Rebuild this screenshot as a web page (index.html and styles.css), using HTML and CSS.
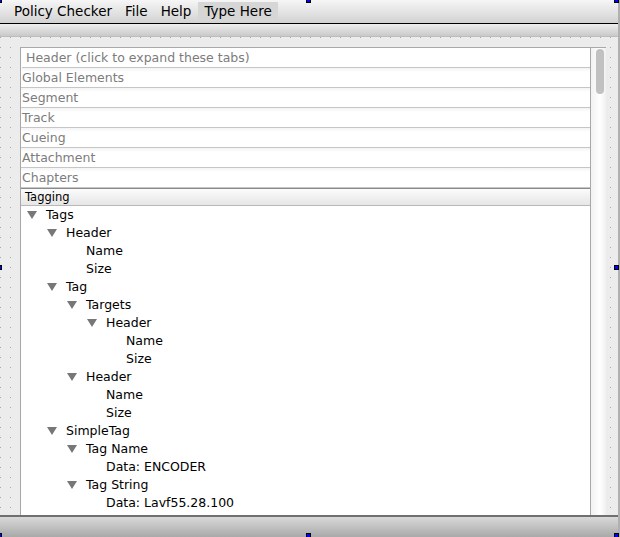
FILE: index.html
```html
<!DOCTYPE html>
<html>
<head>
<meta charset="utf-8">
<link rel="stylesheet" href="styles.css">
</head>
<body>
<div class="window">
  <div class="menubar">
    <span class="menu">Policy Checker</span>
    <span class="menu">File</span>
    <span class="menu">Help</span>
    <span class="menu typehere">Type Here</span>
  </div>
  <div class="toolbar"></div>
  <div class="canvas">
    <div class="panel">
      <div class="content">
        <div class="tab first">Header (click to expand these tabs)</div>
        <div class="tab">Global Elements</div>
        <div class="tab">Segment</div>
        <div class="tab">Track</div>
        <div class="tab">Cueing</div>
        <div class="tab">Attachment</div>
        <div class="tab">Chapters</div>
        <div class="section">Tagging</div>
        <div class="tree">
          <div class="node l0"><span class="tri"></span>Tags</div>
          <div class="node l1"><span class="tri"></span>Header</div>
          <div class="node l2"><span class="leaf"></span>Name</div>
          <div class="node l2"><span class="leaf"></span>Size</div>
          <div class="node l1"><span class="tri"></span>Tag</div>
          <div class="node l2"><span class="tri"></span>Targets</div>
          <div class="node l3"><span class="tri"></span>Header</div>
          <div class="node l4"><span class="leaf"></span>Name</div>
          <div class="node l4"><span class="leaf"></span>Size</div>
          <div class="node l2"><span class="tri"></span>Header</div>
          <div class="node l3"><span class="leaf"></span>Name</div>
          <div class="node l3"><span class="leaf"></span>Size</div>
          <div class="node l1"><span class="tri"></span>SimpleTag</div>
          <div class="node l2"><span class="tri"></span>Tag Name</div>
          <div class="node l3"><span class="leaf"></span>Data: ENCODER</div>
          <div class="node l2"><span class="tri"></span>Tag String</div>
          <div class="node l3"><span class="leaf"></span>Data: Lavf55.28.100</div>
        </div>
      </div>
      <div class="scrollbar"><div class="thumb"></div></div>
    </div>
  </div>
  <div class="statusbar"></div>
  <span class="handle h-tl"></span>
  <span class="handle h-tc"></span>
  <span class="handle h-tr"></span>
  <span class="handle h-ml"></span>
  <span class="handle h-mr"></span>
  <span class="handle h-bl"></span>
  <span class="handle h-bc"></span>
  <span class="handle h-br"></span>
</div>
</body>
</html>
```
FILE: styles.css
```css
html, body {
  margin: 0;
  padding: 0;
  background: #ffffff;
}
body {
  font-family: "DejaVu Sans", "Liberation Sans", sans-serif;
  width: 620px;
  height: 537px;
  overflow: hidden;
}
.window {
  position: relative;
  width: 618px;
  height: 537px;
  border-right: 2px solid #b0b0b0;
  display: flex;
  flex-direction: column;
  background: #ececec;
}
.menubar {
  height: 23px;
  border-bottom: 1px solid #000;
  background: linear-gradient(#f6f6f6, #d2d2d2);
  display: flex;
  align-items: center;
  padding-left: 8px;
  font-size: 13.5px;
  color: #000;
}
.menu {
  padding: 1px 6px;
  line-height: 17px;
}
.menu + .menu {
  margin-left: 1px;
}
.typehere {
  background: #d6d6d6;
  margin-left: 2px;
}
.toolbar {
  height: 12px;
  background: linear-gradient(#eeeeee, #c9c9c9);
  border-bottom: 1px solid #bdbdbd;
}
.canvas {
  flex: 1;
  background-color: #ececec;
  background-image: radial-gradient(circle at 0.5px 0.5px, #a8a8a8 0.8px, transparent 0.9px);
  background-size: 10px 10px;
  background-position: 0 0;
  padding: 10px 12px 0 20px;
  display: flex;
}
.panel {
  flex: 1;
  display: flex;
  background: #fff;
  border-top: 1px solid #a9a9a9;
}
.content {
  flex: 1;
  border-left: 1px solid #a8a8a8;
  border-right: 1px solid #a8a8a8;
  overflow: hidden;
}
.tab {
  height: 19px;
  line-height: 19px;
  font-size: 12.5px;
  color: #7c7c7c;
  padding-left: 1px;
  border-bottom: 1px solid #c6c6c6;
  background: linear-gradient(#f4f4f4, #ffffff 4px);
}
.tab.first {
  padding-left: 4px;
  background: #fff;
  margin-left: 1px;
}
.section {
  height: 16px;
  line-height: 16px;
  font-size: 11.5px;
  color: #000;
  padding-left: 4px;
  border-top: 1px solid #8a8a8a;
  border-bottom: 1px solid #b8b8b8;
  background: linear-gradient(#fbfbfb, #e6e6e6);
}
.tree {
  font-size: 12.5px;
  color: #000;
}
.node {
  height: 18px;
  line-height: 18px;
  display: flex;
  align-items: center;
}
.tri {
  width: 0;
  height: 0;
  border-left: 5px solid transparent;
  border-right: 5px solid transparent;
  border-top: 8px solid #777;
  margin-right: 9px;
  margin-left: 1px;
}
.leaf {
  width: 20px;
}
.l0 { padding-left: 5px; }
.l1 { padding-left: 25px; }
.l2 { padding-left: 45px; }
.l3 { padding-left: 65px; }
.l4 { padding-left: 85px; }
.scrollbar {
  width: 15px;
  background: linear-gradient(90deg, #f2f2f2, #ffffff 60%, #f0f0f0);
  padding-top: 1px;
  display: flex;
  justify-content: center;
}
.thumb {
  width: 8px;
  height: 45px;
  border-radius: 4px;
  background: #c1c1c1;
  margin-left: 2px;
}
.statusbar {
  height: 20px;
  border-top: 2px solid #707070;
  background: linear-gradient(#d9d9d9, #a9a9a9);
}
.handle {
  position: absolute;
  width: 3px;
  height: 3px;
  background: #0000ff;
  border: 1px solid #000;
}
.h-tl { left: -3px; top: -2px; }
.h-tc { left: 306px; top: -2px; }
.h-tr { left: 614px; top: -2px; }
.h-ml { left: -3px; top: 265px; }
.h-mr { left: 614px; top: 265px; }
.h-bl { left: -3px; top: 533px; }
.h-bc { left: 306px; top: 533px; }
.h-br { left: 614px; top: 533px; }
```
